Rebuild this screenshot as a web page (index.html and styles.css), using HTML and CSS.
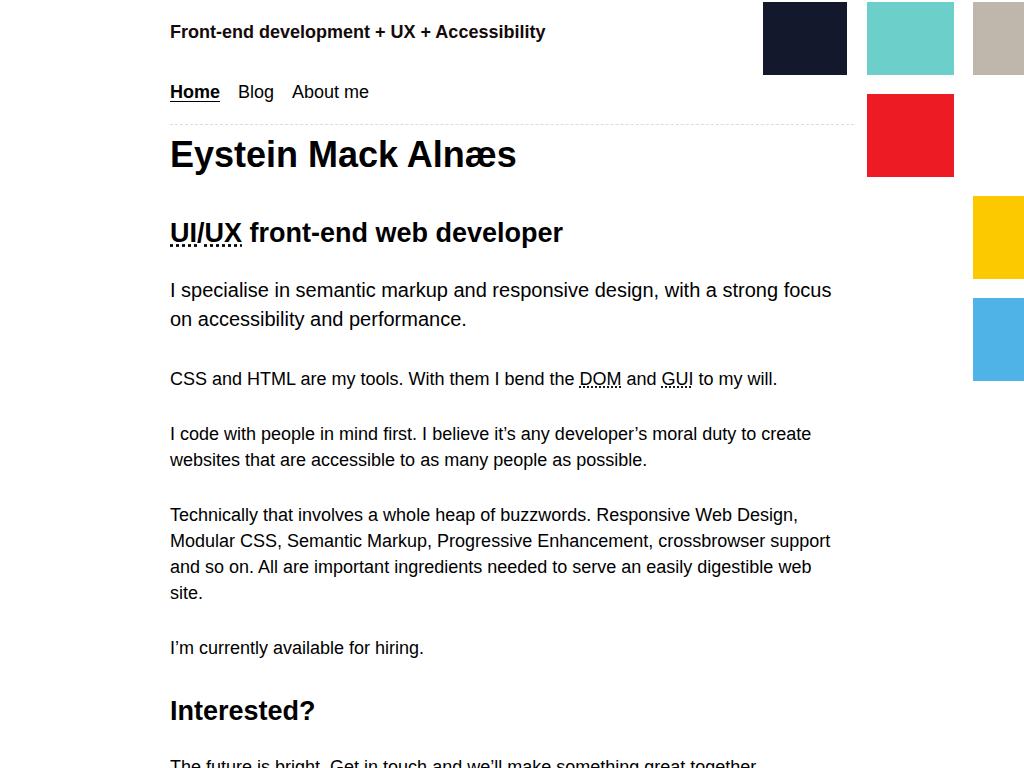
FILE: index.html
```html
<!DOCTYPE html>
<html lang="en">
<head>
<meta charset="utf-8">
<title>Eystein Mack Alnæs</title>
<link rel="stylesheet" href="styles.css">
</head>
<body>
<div class="tiles" aria-hidden="true">
  <span class="tile navy"></span>
  <span class="tile teal"></span>
  <span class="tile stone"></span>
  <span class="tile red"></span>
  <span class="tile yellow"></span>
  <span class="tile blue"></span>
</div>
<div class="page">
  <header class="site-header">
    <p class="tagline">Front-end development + UX + Accessibility</p>
    <nav class="nav">
      <a class="nav-link current" href="#">Home</a>
      <a class="nav-link" href="#">Blog</a>
      <a class="nav-link" href="#">About me</a>
    </nav>
  </header>
  <main class="content">
    <h1 class="title">Eystein Mack Alnæs</h1>
    <h2 class="subtitle"><abbr title="User Interface">UI</abbr>/<abbr title="User Experience">UX</abbr> front-end web developer</h2>
    <p class="lead">I specialise in semantic markup and responsive design, with a strong focus on accessibility and performance.</p>
    <p class="text">CSS and HTML are my tools. With them I bend the <abbr title="Document Object Model">DOM</abbr> and <abbr title="Graphical User Interface">GUI</abbr> to my will.</p>
    <p class="text">I code with people in mind first. I believe it’s any developer’s moral duty to create websites that are accessible to as many people as possible.</p>
    <p class="text">Technically that involves a whole heap of buzzwords. Responsive Web Design, Modular CSS, Semantic Markup, Progressive Enhancement, crossbrowser support and so on. All are important ingredients needed to serve an easily digestible web site.</p>
    <p class="text">I’m currently available for hiring.</p>
    <h2 class="subtitle">Interested?</h2>
    <p class="text">The future is bright. Get in touch and we’ll make something great together.</p>
  </main>
</div>
</body>
</html>
```

FILE: styles.css
```css
html, body {
  margin: 0;
  padding: 0;
  overflow-x: hidden;
}

body {
  font-family: "Liberation Sans", Arial, Helvetica, sans-serif;
  color: #000;
  background: #fff;
  position: relative;
  min-height: 768px;
}

.page {
  width: 684px;
  margin: 0 auto;
}

.site-header {
  padding-top: 19px;
  border-bottom: 1px dashed #dcdcdc;
  padding-bottom: 19px;
}

.tagline {
  margin: 0;
  font-size: 18px;
  line-height: 26px;
  font-weight: 700;
  color: #140a0a;
}

.nav {
  display: flex;
  gap: 18px;
  margin-top: 34px;
}

.nav-link {
  font-size: 18px;
  line-height: 26px;
  color: #000;
  text-decoration: none;
}

.nav-link.current {
  font-weight: 700;
  text-decoration: underline;
  text-underline-offset: 3px;
}

.content {
  padding-bottom: 40px;
}

.title {
  margin: 8px 0 42px;
  font-size: 36px;
  line-height: 43px;
  font-weight: 700;
}

.subtitle {
  margin: 35px 0 27px;
  font-size: 27px;
  line-height: 31px;
  font-weight: 700;
}

.title + .subtitle {
  margin-top: 0;
}

abbr[title] {
  text-decoration: underline dotted;
  text-underline-offset: 2px;
}

.lead {
  margin: 0 0 32px;
  font-size: 20px;
  line-height: 29px;
}

.text {
  max-width: 670px;
  margin: 0 0 29px;
  font-size: 18px;
  line-height: 26px;
}

.tiles {
  position: absolute;
  top: 2px;
  left: 763px;
  display: grid;
  grid-template-columns: 84px 87px 87px;
  grid-template-rows: 73px 83px 83px 83px;
  column-gap: 19.5px;
  row-gap: 19px;
}

.tile {
  display: block;
}

.navy { grid-column: 1; grid-row: 1; background: #13182c; }
.teal { grid-column: 2; grid-row: 1; background: #6dcfc9; }
.stone { grid-column: 3; grid-row: 1; background: #bfb7ac; }
.red { grid-column: 2; grid-row: 2; background: #ed1c24; }
.yellow { grid-column: 3; grid-row: 3; background: #fcc800; }
.blue { grid-column: 3; grid-row: 4; background: #4fb3e8; }
```
